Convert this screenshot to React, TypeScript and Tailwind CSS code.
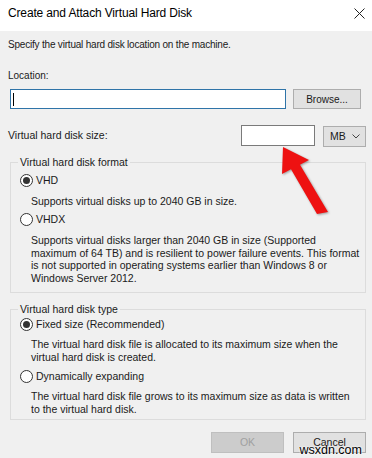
import React from "react";

const Radio = ({ checked }: { checked?: boolean }) => (
  <span className="flex h-[13px] w-[13px] shrink-0 items-center justify-center rounded-full border border-[#333333] bg-white">
    {checked && <span className="h-[7px] w-[7px] rounded-full bg-[#333333]" />}
  </span>
);

export default function App() {
  return (
    <div className="relative h-[458px] w-[372px] overflow-hidden bg-[#f0f0f0] font-['Liberation_Sans',Arial,sans-serif] text-[10px] leading-[13px] text-[#1a1a1a]">
      {/* Title bar */}
      <div className="flex h-[31px] items-start justify-between bg-white pl-[8px] pr-[6px] pt-[6px]">
        <span className="text-[12px] leading-[14px] tracking-[-0.15px] text-black">Create and Attach Virtual Hard Disk</span>
        <svg width="11" height="11" viewBox="0 0 11 11" className="mr-[1px] mt-[2px]">
          <path d="M0.5 0.5 L10.5 10.5 M10.5 0.5 L0.5 10.5" stroke="#222" strokeWidth="1" fill="none" />
        </svg>
      </div>

      {/* Body */}
      <div className="flex flex-col pl-[8px] pr-[6px] pt-[7px]">
        <div className="tracking-[-0.2px]">Specify the virtual hard disk location on the machine.</div>
        <div className="mt-[18px]">Location:</div>
        <div className="mt-[7px] flex items-center gap-[7px] pl-[2px]">
          <div className="flex h-[20px] w-[276px] items-center border border-[#2f74a8] bg-white pl-[2px]">
            <span className="h-[13px] w-[1px] bg-black" />
          </div>
          <div className="flex h-[20px] w-[68px] items-center justify-center border border-[#adadad] bg-[#e1e1e1]">
            Browse...
          </div>
        </div>

        <div className="mt-[15px] flex h-[22px] items-center">
          <span className="flex-1 text-[10.5px]">Virtual hard disk size:</span>
          <div className="mr-[8px] h-[21px] w-[74px] border border-[#7a7a7a] bg-white" />
          <div className="mt-[2px] flex h-[21px] w-[43px] items-center justify-between border border-[#adadad] bg-[#e1e1e1] pl-[6px] pr-[5px] text-[10.5px]">
            <span>MB</span>
            <svg width="8" height="5" viewBox="0 0 8 5">
              <path d="M0.5 0.5 L4 4 L7.5 0.5" stroke="#444" strokeWidth="1" fill="none" />
            </svg>
          </div>
        </div>

        {/* Format group */}
        <fieldset className="ml-[2px] mt-[10px] border border-[#dcdcdc] pb-[8px] pl-[9px] pr-[4px] text-[10.5px]">
          <legend className="ml-[-2px] px-[2px]">Virtual hard disk format</legend>
          <div className="mt-[3px] flex h-[16px] items-center gap-[3px]">
            <Radio checked />
            <span>VHD</span>
          </div>
          <div className="mt-[7px] pl-[11px]">Supports virtual disks up to 2040 GB in size.</div>
          <div className="mt-[3px] flex h-[16px] items-center gap-[3px]">
            <Radio />
            <span>VHDX</span>
          </div>
          <div className="mt-[7px] pl-[11px] leading-[12.5px]">
            Supports virtual disks larger than 2040 GB in size (Supported
            <br />
            maximum of 64 TB) and is resilient to power failure events. This format
            <br />
            is not supported in operating systems earlier than Windows 8 or
            <br />
            Windows Server 2012.
          </div>
        </fieldset>

        {/* Type group */}
        <fieldset className="ml-[2px] mt-[10px] border border-[#dcdcdc] pb-[4px] pl-[9px] pr-[4px] text-[10.5px]">
          <legend className="ml-[-2px] px-[2px]">Virtual hard disk type</legend>
          <div className="flex h-[16px] items-center gap-[3px]">
            <Radio checked />
            <span>Fixed size (Recommended)</span>
          </div>
          <div className="mt-[6px] pl-[11px] leading-[12.5px]">
            The virtual hard disk file is allocated to its maximum size when the
            <br />
            virtual hard disk is created.
          </div>
          <div className="mt-[5px] flex h-[16px] items-center gap-[3px]">
            <Radio />
            <span>Dynamically expanding</span>
          </div>
          <div className="mt-[6px] pl-[11px] leading-[12.5px]">
            The virtual hard disk file grows to its maximum size as data is written
            <br />
            to the virtual hard disk.
          </div>
        </fieldset>

        {/* Buttons */}
        <div className="mt-[12px] flex justify-end gap-[9px] text-[10.5px]">
          <div className="flex h-[21px] w-[73px] items-center justify-center border border-[#bfbfbf] bg-[#cccccc] text-[#a0a0a0]">
            OK
          </div>
          <div className="flex h-[21px] w-[73px] items-center justify-center border border-[#adadad] bg-[#e1e1e1]">
            Cancel
          </div>
        </div>
      </div>

      {/* Watermark */}
      <span className="absolute bottom-[1px] right-[10px] text-[12.5px] leading-[14px] text-black [text-shadow:0_0_2px_#fff,0_0_2px_#fff]">
        wsxdn.com
      </span>

      {/* Red arrow */}
      <svg
        className="absolute left-[262px] top-[145px] drop-shadow-[1px_1px_1px_rgba(0,0,0,0.35)]"
        width="70"
        height="72"
        viewBox="0 0 70 72"
      >
        <polygon points="21,2 47,15 38,19.7 66,67 55,69 29,24.3 20,29" fill="#ee1111" />
      </svg>
    </div>
  );
}
